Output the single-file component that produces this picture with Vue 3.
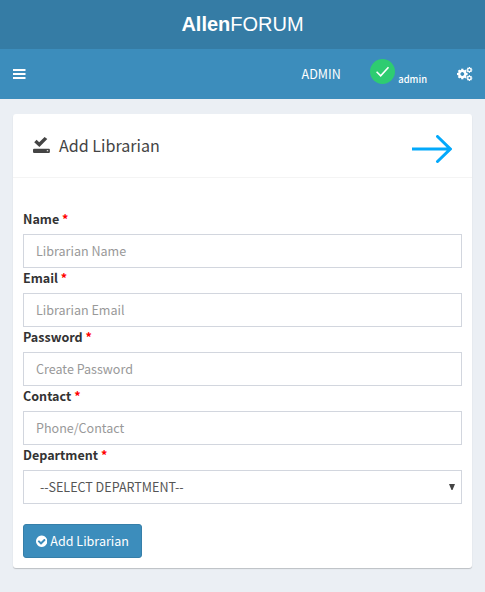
<script setup>
const fields = [
  { label: 'Name', type: 'text', placeholder: 'Librarian Name' },
  { label: 'Email', type: 'email', placeholder: 'Librarian Email' },
  { label: 'Password', type: 'password', placeholder: 'Create Password' },
  { label: 'Contact', type: 'text', placeholder: 'Phone/Contact' },
]
const teeth = [0, 45, 90, 135, 180, 225, 270, 315]
</script>

<template>
  <div class="page">
    <header>
      <a class="logo"><b>Allen</b>FORUM</a>
      <nav class="bar">
        <svg class="menu" viewBox="0 0 13 10" width="13" height="10">
          <path d="M0 0h12.500v2H0zM0 4h12.500v2H0zM0 8h12.500v2H0z" fill="#fff" />
        </svg>
        <span class="role">ADMIN</span>
        <span class="user">
          <svg viewBox="0 0 25 25" width="25" height="25">
            <circle cx="12.5" cy="12.5" r="12.5" fill="#2ecc71" />
            <path d="M6.6 12.8l4.1 4.1 7.8-8.7" fill="none" stroke="#fff" stroke-width="1.6" />
          </svg>
          <small>admin</small>
        </span>
        <svg class="cogs" viewBox="0 0 16 14" width="16" height="14">
          <g transform="translate(5.3 7)">
            <circle r="3.1" fill="none" stroke="#fff" stroke-width="2.4" />
            <rect v-for="a in teeth" :key="a" x="-1.1" y="-5.3" width="2.2" height="2" fill="#fff" :transform="`rotate(${a})`" />
          </g>
          <g v-for="y in [2.9, 11.1]" :key="y" :transform="`translate(12.4 ${y})`">
            <circle r="1.7" fill="none" stroke="#fff" stroke-width="1.3" />
            <rect v-for="a in teeth" :key="a" x="-.6" y="-2.9" width="1.2" height="1" fill="#fff" :transform="`rotate(${a})`" />
          </g>
        </svg>
      </nav>
    </header>

    <section class="box">
      <div class="box-header">
        <svg class="saved" viewBox="0 0 17 16" width="17" height="16">
          <path d="M1.2 5.2L3.6 2.800 6.200 5.200 11.600 0l2.700 2L6.400 9.900z" fill="#444" />
          <path d="M.8 11.800h15.400l.7.7v2.700l-.8.8H.8L0 15.200v-2.700zM13.800 13.300v1h1.400v-1z" fill="#444" fill-rule="evenodd" />
        </svg>
        <h3>Add Librarian</h3>
        <svg class="arrow" viewBox="0 0 40 28" width="40" height="28">
          <path d="M0 14h38M25.500 1.500L38.300 14 25.500 26.500" fill="none" stroke="#03a9fb" stroke-width="3" stroke-linecap="round" />
        </svg>
      </div>
      <form class="box-body" @submit.prevent>
        <div v-for="f in fields" :key="f.label" class="group">
          <label>{{ f.label }} <i>*</i></label>
          <input :type="f.type" :placeholder="f.placeholder" />
        </div>
        <div class="group">
          <label>Department <i>*</i></label>
          <div class="select">
            <span>--SELECT DEPARTMENT--</span>
            <svg viewBox="0 0 6 6" width="6" height="6"><path d="M0 0h6L3.500 6h-1z" fill="#444" /></svg>
          </div>
        </div>
        <button type="submit">
          <svg viewBox="128 128 1536 1536" width="12.500" height="12.500">
            <path fill="#fff" d="M1412 734q0-28-18-46l-91-90q-19-19-45-19t-45 19l-408 407-226-226q-19-19-45-19t-45 19l-91 90q-18 18-18 46 0 27 18 45l362 362q19 19 45 19 27 0 46-19l543-543q18-18 18-45zm252 162q0 209-103 385.500t-279.500 279.500-385.500 103-385.500-103-279.500-279.500-103-385.500 103-385.500 279.500-279.500 385.500-103 385.500 103 279.500 279.500 103 385.500z" />
          </svg>
          <span>Add Librarian</span>
        </button>
      </form>
    </section>
  </div>
</template>

<style>
body { margin: 0; background: #ebeff4; }
</style>

<style scoped>
* { box-sizing: border-box; }
.page {
  height: 592px;
  overflow: hidden;
  background: #ebeff4;
  font-family: "Noto Sans CJK SC", "Noto Sans", sans-serif;
  font-size: 12.55px;
  line-height: 20px;
  color: #333;
}
.logo {
  display: block;
  height: 49px;
  background: #357ca5;
  color: #fff;
  font: 20px/48px "Liberation Sans", Arial, sans-serif;
  text-align: center;
}
.bar {
  display: flex;
  align-items: center;
  height: 50px;
  padding: 0 12px 0 13px;
  background: #3c8dbc;
  color: #fff;
}
.menu { margin-right: auto; }
.role { margin-right: 29.5px; }
.user { display: flex; align-items: center; margin-right: 30px; }
.user svg { margin: -5px 3px 0 0; }
.user small { font-size: 9.4px; font-weight: 500; line-height: 14px; margin-top: 9px; }
.box {
  width: 459px;
  height: 454px;
  margin: 15px 13px 0;
  background: #fff;
  border-radius: 3px;
  box-shadow: 0 1px 1px rgba(0, 0, 0, .2);
}
.box-header {
  display: flex;
  align-items: center;
  height: 64px;
  padding: 0 20px;
  border-bottom: 1px solid #f4f4f4;
}
.saved { margin: -2px 9px 0 0; }
.arrow { margin: 6px 0 0 auto; }
h3 {
  margin: -2px 0 0;
  color: #444;
  font-size: 16.1px;
  line-height: 20px;
  font-weight: 400;
}
.box-body { padding: 31px 10px 10px; }
label { display: block; height: 20px; margin-bottom: 5px; font-weight: 700; }
label i { color: #f00; font-style: normal; }
input, .select {
  display: block;
  width: 100%;
  height: 34px;
  padding: 5px 12px 7px;
  border: 1px solid #d2d6de;
  border-radius: 0;
  background: #fff;
  color: #555;
  font: inherit;
  line-height: 20px;
}
input::placeholder { color: #999; opacity: 1; }
.select { display: flex; align-items: center; justify-content: space-between; padding: 6px 6px 6px 16px; }
button {
  display: flex;
  align-items: center;
  gap: 3px;
  width: 119px;
  height: 34px;
  margin-top: 20px;
  padding: 0 12px;
  border: 1px solid #367fa9;
  border-radius: 3px;
  background: #3c8dbc;
  color: #fff;
  font: inherit;
  text-align: left;
  white-space: nowrap;
}
</style>
